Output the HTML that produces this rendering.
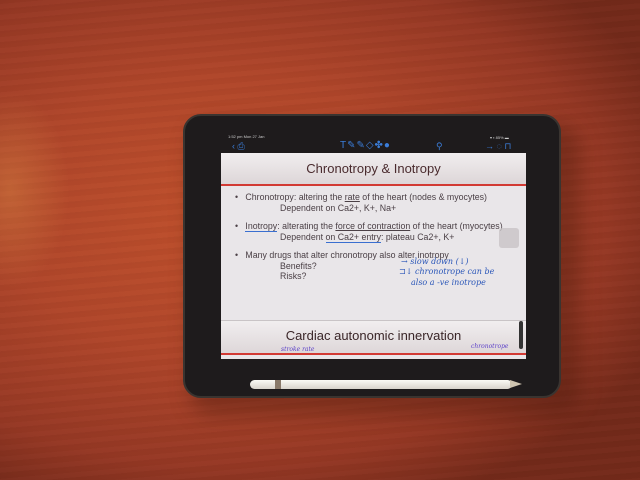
<!DOCTYPE html>
<html><head><style>
*{margin:0;padding:0;box-sizing:border-box}
body{width:640px;height:480px;overflow:hidden;position:relative;font-family:"Liberation Sans",sans-serif;
background:radial-gradient(ellipse 75% 65% at 35% 45%,#c0502c 0%,#b0462a 45%,#963824 80%,#742a1a 100%);}
.grain{position:absolute;inset:0;background:repeating-linear-gradient(175deg,rgba(0,0,0,0.025) 0 4px,rgba(255,255,255,0.012) 4px 9px,rgba(0,0,0,0.03) 9px 11px);}
.glow{position:absolute;left:-50px;top:90px;width:120px;height:200px;background:radial-gradient(ellipse,rgba(220,140,70,0.4),rgba(220,140,70,0) 70%);}
.shadow{position:absolute;left:190px;top:125px;width:390px;height:290px;border-radius:22px;background:rgba(60,20,10,0.35);filter:blur(10px);}
.tab{position:absolute;left:183px;top:114px;width:378px;height:284px;border-radius:18px;background:#1e1b1c;border:2px solid #3a3430;}
.screen{position:absolute;left:221px;top:153px;width:305px;height:206px;background:#e9e6e9;overflow:hidden}
.band{position:absolute;left:0;width:100%;background:linear-gradient(#f1eeef,#ddd6d8)}
.red{position:absolute;left:0;width:100%;height:2px;background:#d23a34}
.t1{position:absolute;top:8px;width:100%;text-align:center;font-size:13px;color:#4a2b2e}
.b{position:absolute;font-size:8.8px;color:#4b4046;white-space:nowrap}
.hw{position:absolute;font-family:"DejaVu Serif",serif;font-style:italic;font-size:8px;color:#2a56b8;white-space:nowrap}
.pencil{position:absolute;left:250px;top:380px;width:262px;height:9px;border-radius:5px;background:linear-gradient(#fbfaf5,#d8d4cc);}
.tip{position:absolute;left:510px;top:380px;width:0;height:0;border-top:4.5px solid transparent;border-bottom:4.5px solid transparent;border-left:12px solid #cfc4b0}
.icons{position:absolute;font-size:9px;color:#3b7dd8}
</style></head><body>
<div class="grain"></div><div class="glow"></div>
<div class="shadow"></div>
<div class="tab"></div>
<div style="position:absolute;left:228px;top:134px;font-size:4px;color:#ccc">1:52 pm Mon 27 Jan</div>
<div style="position:absolute;left:490px;top:135px;font-size:4px;color:#ccc">▾ ▪ 85% ▬</div>
<div class="icons" style="left:232px;top:141px">‹ ⎙</div>
<div class="icons" style="left:340px;top:140px;font-size:10px;letter-spacing:1px">T✎✎◇✤●</div>
<div class="icons" style="left:436px;top:141px">⚲</div>
<div class="icons" style="left:485px;top:141px">→ ◌ ⊓</div>
<div class="screen">
 <div class="band" style="top:0;height:31px"></div>
 <div class="t1">Chronotropy &amp; Inotropy</div>
 <div class="red" style="top:31px"></div>
 <div class="b" style="left:14px;top:39px">•&nbsp;&nbsp;&nbsp;Chronotropy: altering the <u>rate</u> of the heart (nodes &amp; myocytes)</div>
 <div class="b" style="left:59px;top:50px">Dependent on Ca2+, K+, Na+</div>
 <div class="b" style="left:14px;top:68px">•&nbsp;&nbsp;&nbsp;<span style="border-bottom:1px solid #3a6fd0">Inotropy</span>: alterating the <u>force of contraction</u> of the heart (myocytes)</div>
 <div class="b" style="left:59px;top:79px">Dependent <span style="border-bottom:1px solid #3a6fd0">on Ca2+ entry</span>: plateau Ca2+, K+</div>
 <div class="b" style="left:14px;top:97px">•&nbsp;&nbsp;&nbsp;Many drugs that alter chronotropy also alter inotropy</div>
 <div class="b" style="left:59px;top:108px">Benefits?</div>
 <div class="b" style="left:59px;top:118px">Risks?</div>
 <div class="hw" style="left:180px;top:104px">→ slow down (↓)</div>
 <div class="hw" style="left:178px;top:114px">⊐↓ chronotrope can be</div>
 <div class="hw" style="left:190px;top:125px">also a -ve inotrope</div>
 <div class="band" style="top:167px;height:34px;border-top:1px solid #c9c4c6"></div>
 <div style="position:absolute;top:175px;width:100%;text-align:center;font-size:13px;color:#3a2628">Cardiac autonomic innervation</div>
 <div class="red" style="top:200px"></div>
 <div class="hw" style="left:60px;top:193px;font-size:6px;color:#5a3fc8">stroke rate</div>
 <div class="hw" style="left:250px;top:190px;font-size:6px;color:#5a3fc8">chronotrope</div>
 <div style="position:absolute;left:298px;top:168px;width:4px;height:28px;background:#333;border-radius:2px"></div>
</div>
<div style="position:absolute;left:499px;top:228px;width:20px;height:20px;background:rgba(200,195,198,0.8);border-radius:3px"></div>
<div class="pencil"></div>
<div style="position:absolute;left:275px;top:380px;width:6px;height:9px;background:#8a7a6a"></div>
<div class="tip"></div>
</body></html>
